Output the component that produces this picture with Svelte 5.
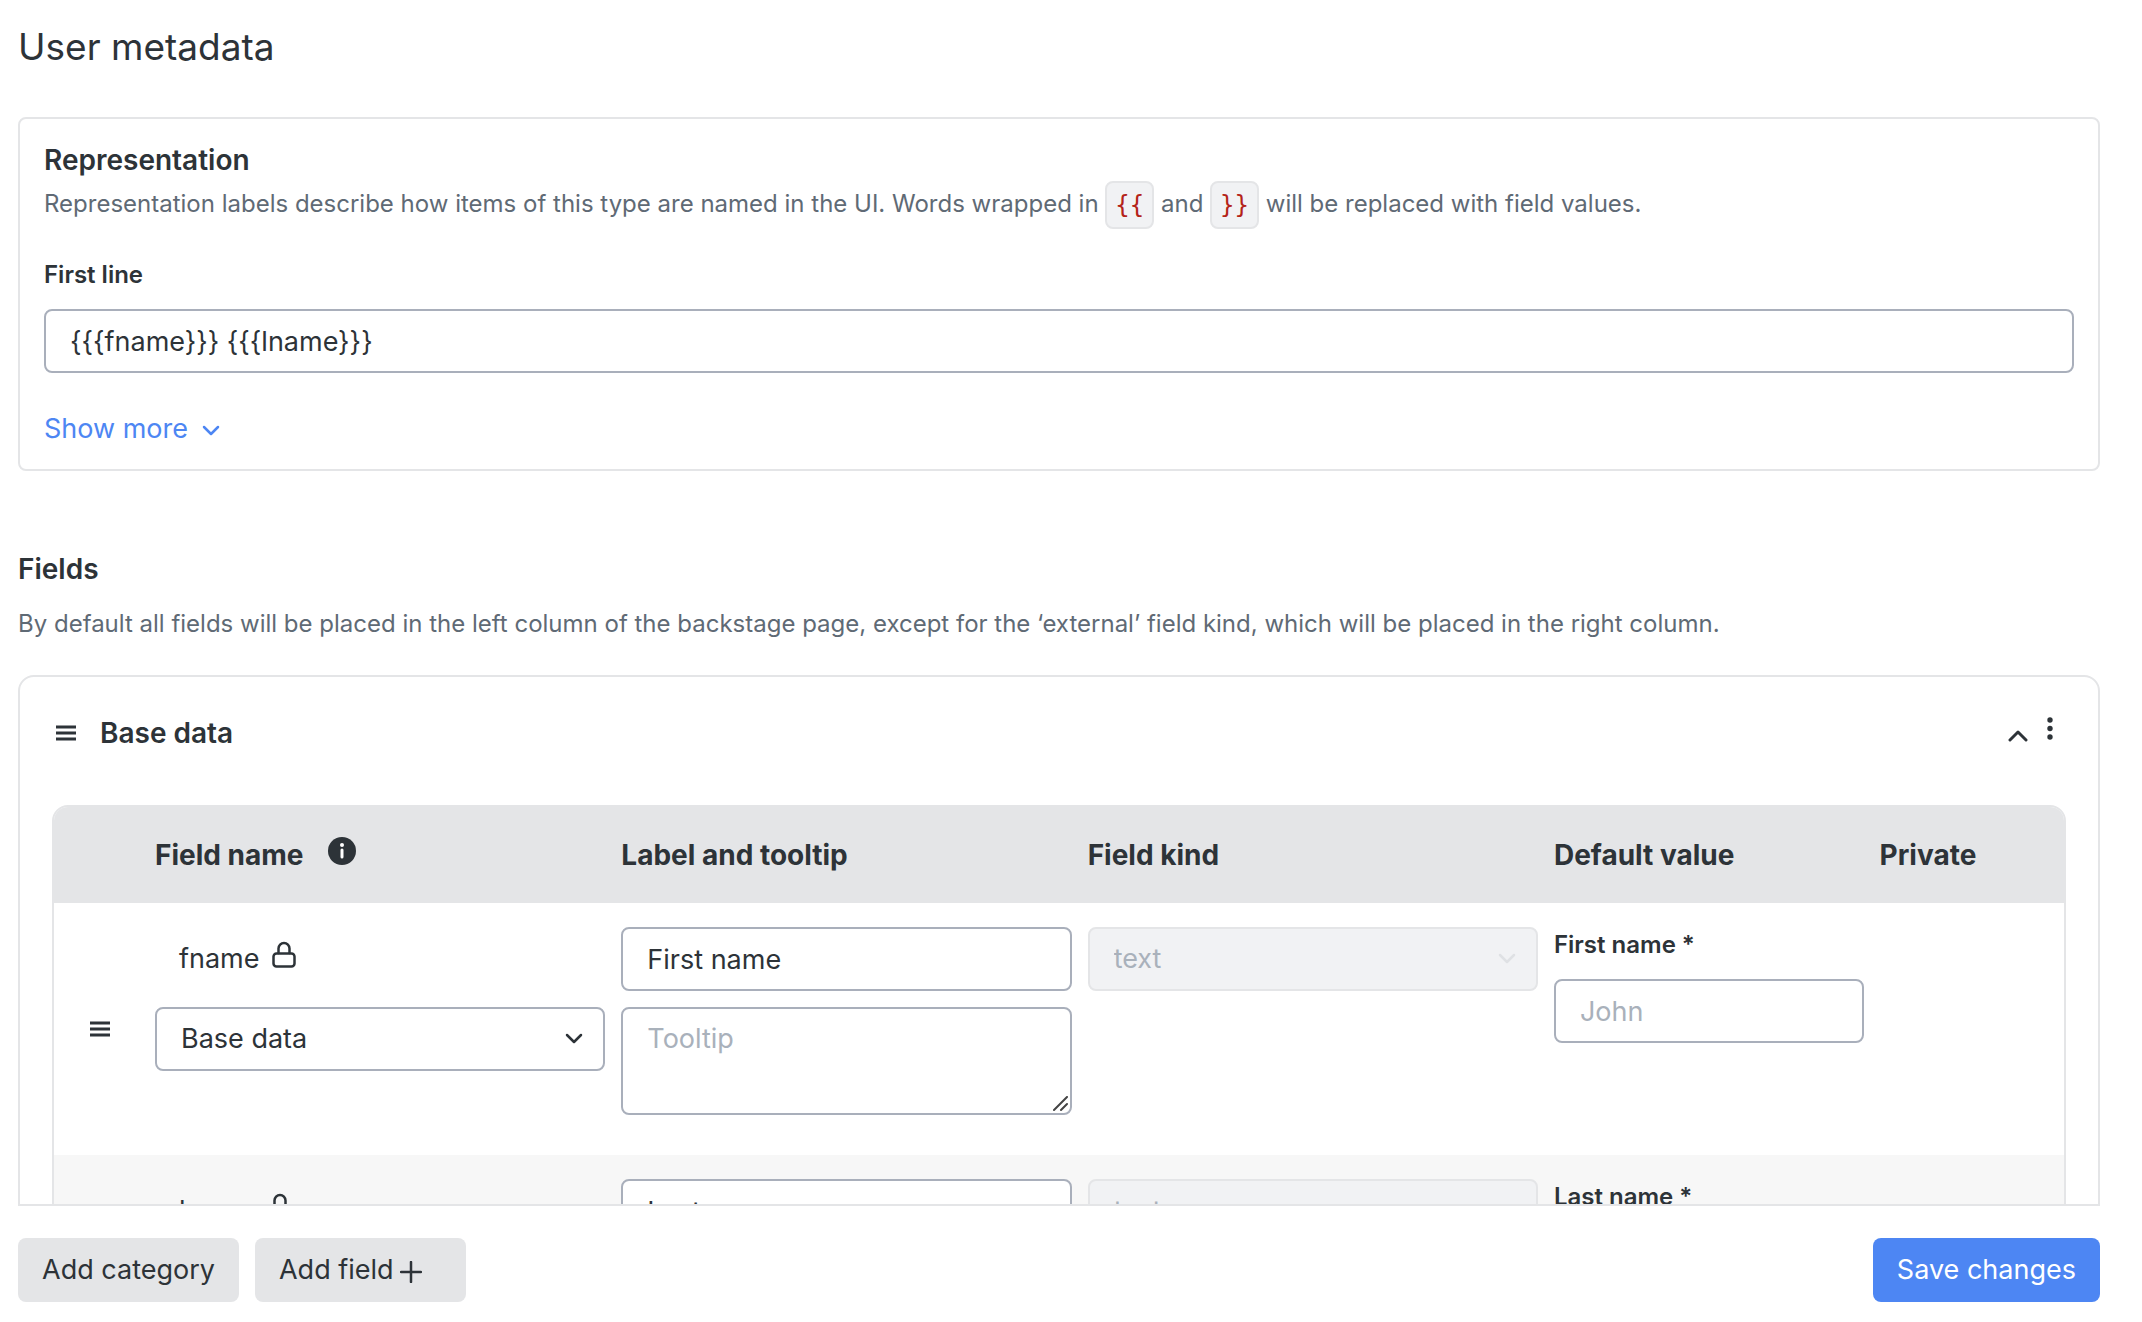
<script>
  let firstLine = '{{{fname}}} {{{lname}}}';
  let showMore = false;
  let collapsed = false;

  const categories = ['Base data'];

  let fields = [
    { name: 'fname', label: 'First name', tooltip: '', kind: 'text', category: 'Base data', placeholder: 'John' },
    { name: 'lname', label: 'Last name', tooltip: '', kind: 'text', category: 'Base data', placeholder: 'Doe' }
  ];
</script>

<div class="page">
  <h1>User metadata</h1>

  <section class="card">
    <h2>Representation</h2>
    <p class="hint">
      Representation labels describe how items of this type are named in the UI. Words wrapped in
      <code>{'{{'}</code> and <code>{'}}'}</code> will be replaced with field values.
    </p>
    <label class="label first-line" for="first-line">First line</label>
    <input id="first-line" class="control" type="text" bind:value={firstLine} />
    <button class="link" aria-expanded={showMore} on:click={() => (showMore = !showMore)}>
      Show more
      <svg width="18" height="12" viewBox="0 0 18 12"><path d="M2 2l7 7 7-7" /></svg>
    </button>
  </section>

  <h2 class="fields-title">Fields</h2>
  <p class="hint fields-hint">
    By default all fields will be placed in the left column of the backstage page, except for the ‘external’ field kind, which will be placed in the right column.
  </p>

  <div class="scroll">
    <section class="category">
      <header>
        <svg class="drag" width="20" height="16" viewBox="0 0 20 16"><path d="M0 2h20M0 8h20M0 14h20" /></svg>
        <h2>Base data</h2>
        <button class="icon toggle" aria-label="Collapse" on:click={() => (collapsed = !collapsed)}>
          <svg width="20" height="14" viewBox="0 0 20 14"><path d="M2 11l8-8 8 8" /></svg>
        </button>
        <button class="icon" aria-label="More">
          <svg class="dots" width="8" height="24" viewBox="0 0 8 24">
            <circle cx="4" cy="3" r="2.7" /><circle cx="4" cy="11.5" r="2.7" /><circle cx="4" cy="20" r="2.7" />
          </svg>
        </button>
      </header>

      {#if !collapsed}
        <div class="table-wrap">
          <table>
            <thead>
              <tr>
                <th class="col-drag"></th>
                <th class="col-field">
                  <span class="th-info">
                    Field name
                    <svg class="info" width="28" height="28" viewBox="0 0 28 28">
                      <circle cx="14" cy="14" r="14" />
                      <path d="M14 13v7" />
                      <circle class="dot" cx="14" cy="8" r="2" />
                    </svg>
                  </span>
                </th>
                <th class="col-field">Label and tooltip</th>
                <th class="col-field">Field kind</th>
                <th class="col-default">Default value</th>
                <th>Private</th>
              </tr>
            </thead>
            <tbody>
              {#each fields as field}
                <tr>
                  <td class="handle">
                    <svg class="drag" width="20" height="16" viewBox="0 0 20 16"><path d="M0 2h20M0 8h20M0 14h20" /></svg>
                  </td>
                  <td>
                    <div class="field-name">
                      {field.name}
                      <svg class="lock" width="24" height="28" viewBox="0 0 24 28">
                        <rect x="1.5" y="12.5" width="21" height="13" rx="3" />
                        <path d="M6.5 12V7.5a5.5 5.5 0 0 1 11 0V12" />
                      </svg>
                    </div>
                    <div class="select">
                      <select class="control" aria-label="Category" bind:value={field.category}>
                        {#each categories as category}
                          <option>{category}</option>
                        {/each}
                      </select>
                      <svg width="18" height="12" viewBox="0 0 18 12"><path d="M2 2l7 7 7-7" /></svg>
                    </div>
                  </td>
                  <td>
                    <input class="control" type="text" aria-label="Label" bind:value={field.label} />
                    <div class="tooltip">
                      <textarea class="control" aria-label="Tooltip" placeholder="Tooltip" bind:value={field.tooltip}></textarea>
                      <svg width="16" height="16" viewBox="0 0 16 16"><path d="M1 14L14 1M8 14l6-6" /></svg>
                    </div>
                  </td>
                  <td>
                    <div class="select disabled">
                      <select class="control" aria-label="Field kind" disabled>
                        <option>{field.kind}</option>
                      </select>
                      <svg width="18" height="12" viewBox="0 0 18 12"><path d="M2 2l7 7 7-7" /></svg>
                    </div>
                  </td>
                  <td>
                    <label class="label" for="default-{field.name}">{field.label} *</label>
                    <input id="default-{field.name}" class="control" type="text" placeholder={field.placeholder} />
                  </td>
                  <td></td>
                </tr>
              {/each}
            </tbody>
          </table>
        </div>
      {/if}
    </section>
  </div>

  <footer>
    <button class="btn">Add category</button>
    <button class="btn">
      Add field
      <svg class="plus" width="22" height="22" viewBox="0 0 22 22"><path d="M11 1v20M1 11h20" /></svg>
    </button>
    <button class="btn primary">Save changes</button>
  </footer>
</div>

<style>
  :global(body) {
    background: #fff;
  }

  .page {
    --text: #2d3338;
    --muted: #5f6a75;
    --line: #e4e5e7;
    --control: #a9afbb;
    --accent: #4d86f3;

    box-sizing: border-box;
    display: flex;
    flex-direction: column;
    height: 100vh;
    padding: 22px 42px 20px 18px;
    font-family: Inter, sans-serif;
    font-size: 27px;
    line-height: 40px;
    color: var(--text);
  }

  h1,
  h2,
  p {
    margin: 0;
  }

  h1 {
    margin-bottom: 45px;
    font-size: 37px;
    line-height: 50px;
    font-weight: 400;
  }

  h2 {
    font-size: 28px;
    line-height: 40px;
    font-weight: 600;
  }

  svg {
    flex: none;
    fill: none;
    stroke: currentColor;
    stroke-width: 2.5;
    stroke-linecap: round;
    stroke-linejoin: round;
  }

  button {
    font: inherit;
    cursor: pointer;
  }

  .card {
    padding: 21px 24px 20px;
    border: 2px solid var(--line);
    border-radius: 8px;
  }

  .hint {
    font-size: 24px;
    line-height: 48px;
    color: var(--muted);
  }

  code {
    display: inline-block;
    padding: 0 8px;
    border: 2px solid var(--line);
    border-radius: 8px;
    background: #f1f2f4;
    font-family: "DejaVu Sans Mono", monospace;
    font-size: 24px;
    line-height: 44px;
    vertical-align: middle;
    color: #b42318;
  }

  .label {
    display: block;
    margin-bottom: 16px;
    font-size: 24px;
    line-height: 36px;
    font-weight: 600;
  }

  .first-line {
    margin-top: 28px;
  }

  .control {
    display: block;
    box-sizing: border-box;
    width: 100%;
    height: 64px;
    margin: 0;
    padding: 0 24px;
    border: 2px solid var(--control);
    border-radius: 8px;
    background: #fff;
    font: inherit;
    color: var(--text);
    appearance: none;
  }

  .control::placeholder {
    color: #a9b1bb;
    opacity: 1;
  }

  .link {
    display: flex;
    align-items: center;
    gap: 14px;
    margin-top: 36px;
    padding: 0;
    border: 0;
    background: none;
    color: var(--accent);
  }

  .link svg {
    margin-top: 4px;
  }

  .fields-title {
    margin-top: 78px;
  }

  .fields-hint {
    margin: 19px 0 35px;
    line-height: 32px;
  }

  /* The list scrolls above the fixed footer buttons */
  .scroll {
    flex: 1;
    min-height: 0;
    overflow-y: auto;
    scrollbar-width: none;
    border-bottom: 2px solid var(--line);
  }

  .category {
    padding: 36px 32px;
    border: 2px solid var(--line);
    border-radius: 16px;
  }

  .category header {
    display: flex;
    align-items: center;
    margin-bottom: 52px;
    padding: 0 8px 0 4px;
  }

  .drag {
    display: block;
    stroke-width: 3;
    stroke-linecap: butt;
  }

  header h2 {
    flex: 1;
    margin-left: 24px;
  }

  .icon {
    display: flex;
    padding: 0 4px;
    border: 0;
    background: none;
    color: var(--text);
  }

  .icon svg {
    stroke-width: 3;
  }

  .toggle {
    margin: 6px 10px 0 0;
  }

  .icon .dots {
    margin-bottom: 8px;
    fill: currentColor;
    stroke: none;
  }

  .table-wrap {
    overflow: hidden;
    border: 2px solid var(--line);
    border-radius: 16px;
  }

  table {
    width: 100%;
    border-collapse: collapse;
    table-layout: fixed;
  }

  th {
    box-sizing: border-box;
    height: 96px;
    padding: 0 8px;
    background: var(--line);
    font-size: 28px;
    font-weight: 700;
    text-align: left;
  }

  .col-drag {
    width: 93px;
  }

  .col-field {
    width: 23.2%;
  }

  .col-default {
    width: 16.2%;
  }

  .th-info {
    display: flex;
    align-items: center;
    gap: 24px;
  }

  .info {
    margin-bottom: 8px;
    fill: var(--text);
    stroke: #fff;
    stroke-width: 3;
  }

  .info circle {
    stroke: none;
  }

  .info .dot {
    fill: #fff;
  }

  td {
    padding: 24px 8px 40px;
    vertical-align: top;
  }

  tbody tr:nth-child(even) {
    background: #f7f7f7;
  }

  .handle {
    padding: 0 36px;
    vertical-align: middle;
  }

  .field-name {
    display: flex;
    align-items: center;
    gap: 12px;
    height: 64px;
    margin-bottom: 16px;
    padding-left: 24px;
  }

  .lock {
    margin-bottom: 8px;
  }

  .select,
  .tooltip {
    position: relative;
  }

  .select svg {
    position: absolute;
    top: 26px;
    right: 22px;
    pointer-events: none;
  }

  .disabled .control {
    border-color: var(--line);
    background: #f1f2f4;
    color: #a9b1bb;
    opacity: 1;
  }

  .disabled svg {
    color: #dfe1e4;
  }

  .tooltip {
    margin-top: 16px;
  }

  textarea.control {
    height: 108px;
    padding: 10px 24px;
    resize: none;
  }

  .tooltip svg {
    position: absolute;
    right: 3px;
    bottom: 3px;
    stroke: #444;
    stroke-width: 2;
    pointer-events: none;
  }

  footer {
    display: flex;
    gap: 16px;
    margin-top: 32px;
  }

  .btn {
    display: flex;
    align-items: center;
    height: 64px;
    padding: 0 24px;
    border: 0;
    border-radius: 8px;
    background: var(--line);
    color: var(--text);
  }

  .primary {
    margin-left: auto;
    background: var(--accent);
    color: #fff;
  }

  .plus {
    margin: 4px 20px 0 6px;
  }
</style>
